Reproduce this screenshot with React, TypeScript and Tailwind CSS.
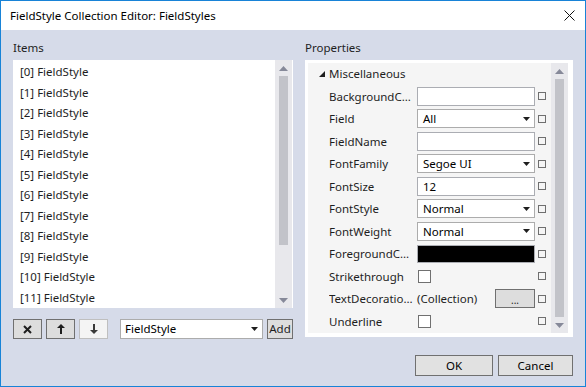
import React from "react";

const font = { fontFamily: '"Noto Sans", "Open Sans", sans-serif' };

function ScrollArrow({ down }: { down?: boolean }) {
  return (
    <svg width="9" height="5" viewBox="0 0 9 5" className="block">
      {down ? <polygon points="0,0 9,0 4.5,5" fill="#868999" /> : <polygon points="0,5 9,5 4.5,0" fill="#868999" />}
    </svg>
  );
}

function ScrollBar({ thumbTop, thumbHeight }: { thumbTop: number; thumbHeight: number }) {
  return (
    <div className="w-[17px] bg-[#e8e8ec] flex flex-col items-center relative">
      <div className="h-[16px] flex items-center justify-center">
        <ScrollArrow />
      </div>
      <div className="flex-1 w-full flex justify-center">
        <div className="w-[9px] bg-[#c2c3c9]" style={{ marginTop: thumbTop, height: thumbHeight }} />
      </div>
      <div className="h-[16px] flex items-center justify-center">
        <ScrollArrow down />
      </div>
    </div>
  );
}

function DropArrow() {
  return (
    <svg width="7" height="4" viewBox="0 0 7 4" className="block">
      <polygon points="0,0 7,0 3.5,4" fill="#1e1e1e" />
    </svg>
  );
}

function Marker() {
  return <div className="w-[8px] h-[8px] border border-[#6f6f6f] bg-[#f5f5f5] ml-[3px]" />;
}

type Prop = { name: string; kind: "text" | "combo" | "black" | "check" | "coll"; value?: string };

const props: Prop[] = [
  { name: "BackgroundColor", kind: "text" },
  { name: "Field", kind: "combo", value: "All" },
  { name: "FieldName", kind: "text" },
  { name: "FontFamily", kind: "combo", value: "Segoe UI" },
  { name: "FontSize", kind: "text", value: "12" },
  { name: "FontStyle", kind: "combo", value: "Normal" },
  { name: "FontWeight", kind: "combo", value: "Normal" },
  { name: "ForegroundColor", kind: "black" },
  { name: "Strikethrough", kind: "check" },
  { name: "TextDecorations", kind: "coll" },
  { name: "Underline", kind: "check" },
];

function PropValue({ p }: { p: Prop }) {
  if (p.kind === "text")
    return (
      <div className="w-[118px] h-[19px] bg-white border border-[#abadb3] px-[5px] flex items-center text-[11.5px] text-black">
        {p.value}
      </div>
    );
  if (p.kind === "combo")
    return (
      <div className="w-[118px] h-[19px] bg-white border border-[#acacac] pl-[5px] pr-[4px] flex items-center justify-between text-[11.5px] text-black">
        <span>{p.value}</span>
        <DropArrow />
      </div>
    );
  if (p.kind === "black") return <div className="w-[118px] h-[18px] bg-black border border-[#abadb3]" />;
  if (p.kind === "check")
    return (
      <div className="w-[118px] flex items-center pl-[1px]">
        <div className="w-[13px] h-[13px] bg-white border border-[#707070]" />
      </div>
    );
  return (
    <div className="w-[118px] flex items-center justify-between text-[11.5px] text-[#1e1e1e]">
      <span>(Collection)</span>
      <div className="w-[40px] h-[19px] bg-[#dddddd] border border-[#707070] flex items-end justify-center text-[10px] leading-[14px]">
        ...
      </div>
    </div>
  );
}

function SmallButton({ children, disabled }: { children: React.ReactNode; disabled?: boolean }) {
  return (
    <div
      className={
        disabled
          ? "w-[29px] h-[20px] bg-[#f4f4f4] border border-[#bfbfbf] flex items-center justify-center"
          : "w-[29px] h-[20px] bg-[#dddddd] border border-[#707070] flex items-center justify-center"
      }
    >
      {children}
    </div>
  );
}

export default function App() {
  const items = Array.from({ length: 12 }, (_, i) => `[${i}] FieldStyle`);

  return (
    <div className="w-[586px] h-[387px] border border-[#1883d7] flex flex-col overflow-hidden" style={font}>
      <div className="h-[29px] bg-white flex items-center justify-between pl-[9px] pr-[10px] shrink-0">
        <span className="text-[11.5px] text-black">FieldStyle Collection Editor: FieldStyles</span>
        <svg width="11" height="11" viewBox="0 0 11 11">
          <path d="M0.5 0.5 L10.5 10.5 M10.5 0.5 L0.5 10.5" stroke="#111" strokeWidth="1" />
        </svg>
      </div>

      <div className="flex-1 bg-[#d6dbe9] flex flex-col px-[12px] pt-[10px]">
        <div className="flex gap-[12px]">
          <div className="w-[280px] flex flex-col">
            <div className="text-[11.5px] leading-[16px] text-[#1e1e1e] mb-[4px]">Items</div>
            <div className="h-[248px] bg-white flex">
              <div className="flex-1 pt-[1.5px] pl-[7px]">
                {items.map((t) => (
                  <div key={t} className="h-[20.5px] flex items-center text-[11.5px] text-[#1e1e1e]">
                    {t}
                  </div>
                ))}
              </div>
              <ScrollBar thumbTop={0} thumbHeight={169} />
              <div className="w-[1px]" />
            </div>
            <div className="flex items-center mt-[11px]">
              <div className="flex gap-[4px]">
                <SmallButton>
                  <svg width="9" height="9" viewBox="0 0 9 9">
                    <path d="M1 1 L8 8 M8 1 L1 8" stroke="#1e1e1e" strokeWidth="2" />
                  </svg>
                </SmallButton>
                <SmallButton>
                  <svg width="8" height="10" viewBox="0 0 8 10">
                    <path d="M4 10 L4 2" stroke="#1e1e1e" strokeWidth="2" />
                    <polygon points="0,4 8,4 4,0" fill="#1e1e1e" />
                  </svg>
                </SmallButton>
                <SmallButton disabled>
                  <svg width="8" height="10" viewBox="0 0 8 10">
                    <path d="M4 0 L4 8" stroke="#3a3a3a" strokeWidth="2" />
                    <polygon points="0,6 8,6 4,10" fill="#3a3a3a" />
                  </svg>
                </SmallButton>
              </div>
              <div className="ml-[12px] w-[143px] h-[20px] bg-white border border-[#acacac] flex items-center justify-between pl-[4px] pr-[4px] text-[11.5px] text-black">
                <span>FieldStyle</span>
                <DropArrow />
              </div>
              <div className="ml-[4px] w-[26px] h-[20px] bg-[#dddddd] border border-[#707070] flex items-center justify-center text-[11.5px] text-[#1e1e1e]">
                Add
              </div>
            </div>
          </div>

          <div className="w-[268px] flex flex-col">
            <div className="text-[11.5px] leading-[16px] text-[#1e1e1e] mb-[4px]">Properties</div>
            <div className="h-[277px] bg-white pt-[3px] pl-[3px] pr-[5px] pb-[4px] flex">
              <div className="flex-1 bg-[#f5f5f5] flex flex-col">
                <div className="h-[22px] flex items-center pl-[11px] gap-[4px] text-[11.5px] text-[#1e1e1e]">
                  <svg width="6" height="6" viewBox="0 0 6 6">
                    <polygon points="6,0 6,6 0,6" fill="#1e1e1e" />
                  </svg>
                  <span>Miscellaneous</span>
                </div>
                {props.map((p) => (
                  <div key={p.name} className="h-[22.5px] flex items-center pl-[21px] text-[11.5px] text-[#1e1e1e]">
                    <div className="w-[88px] truncate pr-[2px]">{p.name}</div>
                    <PropValue p={p} />
                    <Marker />
                  </div>
                ))}
              </div>
              <ScrollBar thumbTop={0} thumbHeight={238} />
            </div>
          </div>
        </div>

        <div className="flex justify-end gap-[5px] mt-[16px]">
          <div className="w-[78px] h-[21px] bg-[#e1e1e1] border border-[#707070] flex items-center justify-center text-[11.5px] text-black">
            OK
          </div>
          <div className="w-[75px] h-[21px] bg-[#e1e1e1] border border-[#707070] flex items-center justify-center text-[11.5px] text-black">
            Cancel
          </div>
        </div>
      </div>
    </div>
  );
}
